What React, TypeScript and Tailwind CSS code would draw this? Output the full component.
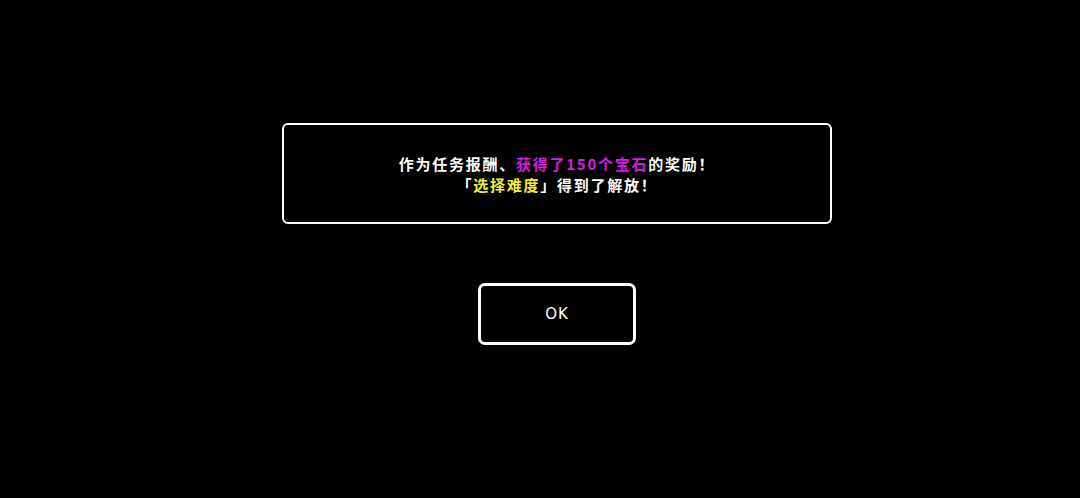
export default function App() {
  return (
    <div className="w-full h-[498px] bg-black overflow-hidden flex flex-col items-center pt-[123px] pl-[34px] font-['Noto_Sans_CJK_SC',sans-serif]">
      <div className="w-[550px] h-[101px] border-2 border-white rounded-[6px] flex flex-col items-center justify-center text-white text-[15px] leading-[21px] tracking-[1.75px] font-bold">
        <p>
          作为任务报酬、<span className="text-[#d21ee6]">获得了150个宝石</span>的奖励！
        </p>
        <p>
          「<span className="text-[#f0f032]">选择难度</span>」得到了解放！
        </p>
      </div>
      <button className="mt-[59px] w-[158px] h-[62px] border-[3px] border-white rounded-[7px] text-white text-[15px] tracking-[1px] font-['DejaVu_Sans',sans-serif]">
        OK
      </button>
    </div>
  );
}
